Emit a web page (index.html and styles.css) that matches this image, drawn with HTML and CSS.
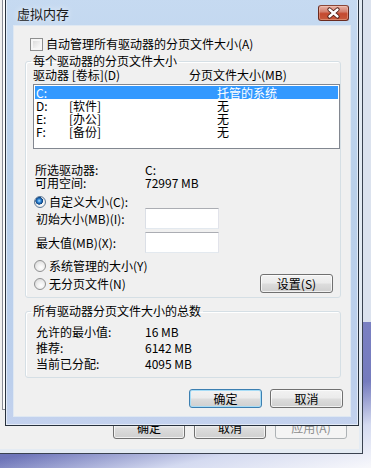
FILE: index.html
```html
<!DOCTYPE html>
<html lang="zh-CN">
<head>
  <meta charset="UTF-8">
  <title>虚拟内存</title>
  <link rel="stylesheet" href="styles.css">
</head>
<body>
  <div class="desktop">

    <!-- parent window (performance options), inactive behind the dialog -->
    <div class="parent-win">
      <div class="parent-client">
        <div class="tab-page"></div>
        <div class="parent-buttons">
          <button class="btn">确定</button>
          <button class="btn">取消</button>
          <button class="btn" disabled>应用(A)</button>
        </div>
      </div>
    </div>

    <!-- virtual memory dialog -->
    <div class="dialog">
      <div class="titlebar">
        <span class="title">虚拟内存</span>
        <span class="close">
          <svg width="31" height="16" viewBox="0 0 31 16">
            <path d="M11.5 4.5 L19.5 11.5 M19.5 4.5 L11.5 11.5" stroke="#4a1a12" stroke-width="4.2" stroke-linecap="round"/>
            <path d="M11.5 4.5 L19.5 11.5 M19.5 4.5 L11.5 11.5" stroke="#ffffff" stroke-width="2.4" stroke-linecap="round"/>
          </svg>
        </span>
      </div>

      <div class="client">
        <label class="check-row">
          <span class="checkbox"></span>
          <span>自动管理所有驱动器的分页文件大小(A)</span>
        </label>

        <fieldset class="group">
          <legend>每个驱动器的分页文件大小</legend>

          <div class="list-head">
            <span>驱动器 [卷标](D)</span>
            <span>分页文件大小(MB)</span>
          </div>

          <div class="listbox">
            <div class="list-row selected"><span>C:</span><span></span><span>托管的系统</span></div>
            <div class="list-row"><span>D:</span><span>[软件]</span><span>无</span></div>
            <div class="list-row"><span>E:</span><span>[办公]</span><span>无</span></div>
            <div class="list-row"><span>F:</span><span>[备份]</span><span>无</span></div>
          </div>

          <div class="info">
            <span>所选驱动器:</span><span>C:</span>
            <span>可用空间:</span><span>72997 MB</span>
          </div>

          <div class="radio-row first">
            <span class="radio checked"></span>
            <span>自定义大小(C):</span>
          </div>

          <div class="size-grid">
            <span>初始大小(MB)(I):</span><span class="textbox"></span>
            <span>最大值(MB)(X):</span><span class="textbox"></span>
          </div>

          <div class="radio-row system">
            <span class="radio"></span>
            <span>系统管理的大小(Y)</span>
          </div>

          <div class="radio-row none">
            <span class="radio"></span>
            <span>无分页文件(N)</span>
            <button class="btn set-btn">设置(S)</button>
          </div>
        </fieldset>

        <fieldset class="group totals">
          <legend>所有驱动器分页文件大小的总数</legend>
          <div class="total-grid">
            <span>允许的最小值:</span><span>16 MB</span>
            <span>推荐:</span><span>6142 MB</span>
            <span>当前已分配:</span><span>4095 MB</span>
          </div>
        </fieldset>

        <div class="dialog-buttons">
          <button class="btn default">确定</button>
          <button class="btn">取消</button>
        </div>
      </div>
    </div>

  </div>
</body>
</html>
```

FILE: styles.css
```css
* {
  box-sizing: border-box;
}

body {
  margin: 0;
  font-family: "Noto Sans CJK SC", "Noto Sans", sans-serif;
  font-size: 12px;
  color: #000;
}

.desktop {
  position: relative;
  width: 371px;
  height: 468px;
  overflow: hidden;
  background:
    linear-gradient(168deg, rgba(255,255,255,0) 84%, rgba(230,236,250,0.85) 92%, rgba(255,255,255,0.95) 100%),
    linear-gradient(180deg, #dbe2ee 0, #dbe2ee 322px, #7a80c2 322px, #6d74b8 100%);
}

/* ---------- parent window ---------- */

.parent-win {
  position: absolute;
  left: -10px;
  top: -10px;
  width: 373px;
  height: 464px;
  background: #e4ebf3;
  border-right: 1px solid #3a4250;
  border-bottom: 1px solid #3a4250;
  padding: 0 3px 4px 0;
}

.parent-client {
  height: 100%;
  background: #f0f0f0;
  display: flex;
  flex-direction: column;
}

.tab-page {
  flex: 1;
  margin: 0 12px 6px 12px;
  background: #fcfcfc;
  border: 1px solid #898c95;
  border-top: none;
}

.parent-buttons {
  display: flex;
  justify-content: flex-end;
  gap: 9px;
  padding: 0 12px 10px 0;
}

.parent-buttons .btn {
  width: 72px;
  height: 23px;
}

/* ---------- buttons ---------- */

.btn {
  font-family: inherit;
  font-size: 12px;
  color: #000;
  padding: 0;
  border: 1px solid #707070;
  border-radius: 3px;
  background: linear-gradient(#f2f2f2 0%, #ebebeb 48%, #dddddd 52%, #cfcfcf 100%);
  box-shadow: inset 0 0 0 1px rgba(255,255,255,0.7);
  line-height: 16px;
}

.btn:disabled {
  color: #8d8d8d;
  border-color: #adb2b5;
  background: #f4f4f4;
  box-shadow: none;
}

.btn.default {
  border-color: #3c7fb1;
  box-shadow: inset 0 0 0 1px #a6dcf6;
}

/* ---------- dialog ---------- */

.dialog {
  position: absolute;
  left: 5px;
  top: -6px;
  width: 354px;
  height: 432px;
  border: 1px solid #27313d;
  box-shadow: inset 0 0 0 1px rgba(255,255,255,0.55);
  background: linear-gradient(180deg, #c6daf1 0%, #b9d0ea 45%, #bccfec 90%, #c4d2ee 100%);
  padding: 0 7px 8px 7px;
  display: flex;
  flex-direction: column;
}

.titlebar {
  height: 30px;
  display: flex;
  align-items: flex-start;
  justify-content: space-between;
  padding: 10px 2px 0 4px;
}

.title {
  margin-top: 1px;
  font-size: 13px;
  line-height: 16px;
  color: #1a1a1a;
  text-shadow: 0 0 6px rgba(255,255,255,0.9);
}

.close {
  display: block;
  width: 31px;
  height: 16px;
  border: 1px solid #6a2a1f;
  border-top-color: #8a4638;
  border-radius: 3px;
  background: linear-gradient(180deg, #e8b2a6 0%, #d4806e 40%, #c4492f 55%, #c75a3c 100%);
  box-shadow: inset 0 0 0 1px rgba(255,220,200,0.35);
  overflow: hidden;
}

.close svg {
  display: block;
  margin: -1px 0 0 -1px;
}

.client {
  height: 392px;
  background: #f0f0f0;
  border: 1px solid #dfe8f2;
  padding: 11px 7px 0 11px;
}

/* ---------- controls ---------- */

.check-row {
  display: flex;
  align-items: center;
  gap: 3px;
  height: 14px;
  line-height: 14px;
  margin-left: 5px;
}

.checkbox {
  width: 13px;
  height: 13px;
  border: 1px solid #8e8f8f;
  background: linear-gradient(135deg, #d4d4d4 0%, #f0f0f0 60%, #ffffff 100%);
  box-shadow: inset 0 0 0 2px #f6f6f6;
}

.group {
  width: 316px;
  margin: 3px 0 0 0;
  padding: 0 0 4px 0;
  border: 1px solid #d5dfe5;
  border-radius: 3px;
  box-shadow: inset 1px 1px 0 #ffffff;
}

.group legend {
  margin-left: 5px;
  padding: 0 2px;
  line-height: 14px;
  font-size: 12px;
}

.list-head {
  display: grid;
  grid-template-columns: 156px auto;
  line-height: 14px;
  padding-left: 7px;
}

.listbox {
  margin: 2px 0 0 7px;
  width: 307px;
  height: 65px;
  background: #fff;
  border: 1px solid #828790;
  padding: 1px 1px 0 1px;
}

.list-row {
  display: grid;
  grid-template-columns: 33px 148px auto;
  height: 13px;
  line-height: 13px;
  padding-left: 1px;
}

.list-row.selected {
  background: #3399ff;
  color: #fff;
}

.info {
  display: grid;
  grid-template-columns: 110px auto;
  line-height: 13px;
  margin-top: 14px;
  padding-left: 9px;
}

.radio-row {
  display: flex;
  align-items: center;
  gap: 3px;
  padding-left: 8px;
  line-height: 14px;
}

.radio-row.first {
  margin-top: 6px;
  height: 13px;
}

.radio-row.system {
  margin-top: 6px;
  height: 14px;
}

.radio-row.none {
  margin-top: 1px;
  height: 19px;
  padding-right: 7px;
}

.radio {
  width: 12px;
  height: 12px;
  border-radius: 50%;
  border: 1px solid #8f9091;
  background: radial-gradient(circle at 60% 65%, #ffffff 0, #f0f0f0 40%, #d2d2d2 100%);
}

.radio.checked {
  border-color: #5d7a99;
  background:
    radial-gradient(circle at 42% 38%, #b6e4ff 0, #3b8fdc 1.6px, #13569e 3px, #0d3f78 3.6px, rgba(0,0,0,0) 4px),
    radial-gradient(circle at 60% 65%, #ffffff 0, #eaeaea 50%, #cfcfcf 100%);
}

.set-btn {
  margin-left: auto;
  width: 73px;
  height: 19px;
}

.size-grid {
  display: grid;
  grid-template-columns: 109px 74px;
  grid-auto-rows: 21px;
  row-gap: 3px;
  align-items: center;
  padding-left: 10px;
}

.textbox {
  height: 21px;
  background: #fff;
  border: 1px solid #e2e3ea;
  border-top-color: #abadb3;
  border-left-color: #dbdfe6;
  border-bottom-color: #e3e9ef;
}

.totals {
  margin-top: 6px;
  padding-bottom: 5px;
}

.total-grid {
  display: grid;
  grid-template-columns: 109px auto;
  line-height: 16px;
  margin-top: 6px;
  padding-left: 10px;
}

.dialog-buttons {
  display: flex;
  justify-content: flex-end;
  gap: 8px;
  margin-top: 11px;
  width: 318px;
}

.dialog-buttons .btn {
  width: 73px;
  height: 19px;
}
```
